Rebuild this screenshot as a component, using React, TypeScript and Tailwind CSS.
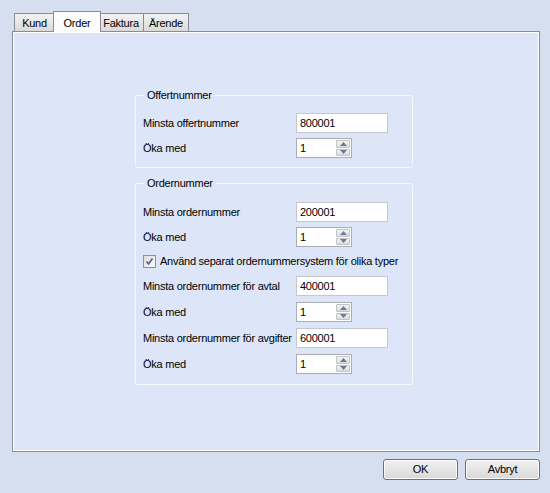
import React from 'react';

const tabs = ['Kund', 'Order', 'Faktura', 'Ärende'];

function Tab({ label, active }: { label: string; active: boolean }) {
  if (active) {
    return (
      <div className="relative z-10 -mb-px -mx-[2px] flex h-[21px] w-[48px] items-start justify-center border border-b-0 border-[#898c95] bg-[#fcfcfc] pt-[3px]">
        {label}
      </div>
    );
  }
  return (
    <div
      className={`flex h-[18px] items-center justify-center border border-b-0 border-[#898c95] bg-gradient-to-b from-[#f3f3f3] to-[#dadada] pt-[1px] ${
        label === 'Kund' ? 'w-[41px]' : 'w-[46px]'
      } ${label === 'Kund' ? '' : '-ml-px'}`}
    >
      {label}
    </div>
  );
}

function TextInput({ value }: { value: string }) {
  return (
    <div className="flex h-[20px] w-[92px] items-center border border-[#c4c7cc] bg-white px-[3px]">
      {value}
    </div>
  );
}

function Spinner({ value }: { value: string }) {
  return (
    <div className="flex h-[20px] w-[56px] items-stretch border border-[#abadb3] bg-white">
      <div className="flex flex-1 items-center px-[3px]">{value}</div>
      <div className="flex w-[16px] flex-col gap-px p-px">
        <div className="flex flex-1 items-center justify-center rounded-[1px] border border-[#c0c3c8] bg-gradient-to-b from-[#f4f4f4] to-[#dcdcdc]">
          <svg width="7" height="4" viewBox="0 0 7 4">
            <path d="M0 4 L3.5 0 L7 4 Z" fill="#6b7b96" />
          </svg>
        </div>
        <div className="flex flex-1 items-center justify-center rounded-[1px] border border-[#c0c3c8] bg-gradient-to-b from-[#f4f4f4] to-[#dcdcdc]">
          <svg width="7" height="4" viewBox="0 0 7 4">
            <path d="M0 0 L7 0 L3.5 4 Z" fill="#6b7b96" />
          </svg>
        </div>
      </div>
    </div>
  );
}

function Row({ label, children, className = '' }: { label: string; children: React.ReactNode; className?: string }) {
  return (
    <div className={`flex h-[20px] items-center ${className}`}>
      <div className="w-[153px] whitespace-nowrap">{label}</div>
      {children}
    </div>
  );
}

function Group({ title, children, className = '' }: { title: string; children: React.ReactNode; className?: string }) {
  return (
    <fieldset className={`w-[278px] rounded-[3px] border border-[#f4f7fd] px-[7px] ${className}`}>
      <legend className="ml-[1px] px-[3px] leading-[13px]">{title}</legend>
      <div className="flex flex-col">{children}</div>
    </fieldset>
  );
}

function Checkbox({ className = '' }: { className?: string }) {
  return (
    <div className={`flex h-[20px] items-center ${className}`}>
      <div className="flex h-[13px] w-[13px] items-center justify-center border border-[#8f8f8f] bg-gradient-to-br from-[#dcdcdc] to-[#fbfbfb]">
        <svg width="9" height="9" viewBox="0 0 9 9">
          <path d="M1.5 4.5 L3.5 7 L7.5 1.5" stroke="#4a5f97" strokeWidth="1.6" fill="none" />
        </svg>
      </div>
      <span className="ml-[4px] whitespace-nowrap">Använd separat ordernummersystem för olika typer</span>
    </div>
  );
}

function Button({ label }: { label: string }) {
  return (
    <button className="flex h-[21px] w-[75px] items-center justify-center rounded-[3px] border border-[#707070] bg-gradient-to-b from-[#f2f2f2] to-[#d8d8d8] shadow-[inset_0_0_0_1px_#fcfcfc]">
      {label}
    </button>
  );
}

export default function App() {
  return (
    <div
      className="flex h-[493px] w-[550px] flex-col bg-[#d6dff0] px-[12px] pt-[12px] text-[11px] tracking-[-0.25px] text-black"
      style={{ fontFamily: '"Liberation Sans", Arial, sans-serif' }}
    >
      {/* Tabs */}
      <div className="flex h-[19px] items-end pl-[2px]">
        {tabs.map((t) => (
          <Tab key={t} label={t} active={t === 'Order'} />
        ))}
      </div>

      {/* Panel */}
      <div className="h-[421px] w-[528px] border border-[#898c95] bg-[#dde6f8] pl-[122px] pt-[57px] shadow-[inset_1px_1px_0_#ffffff,inset_-1px_-1px_0_#ffffff]">
        <Group title="Offertnummer" className="pb-[9px] pt-[11px]">
          <Row label="Minsta offertnummer">
            <TextInput value="800001" />
          </Row>
          <Row label="Öka med" className="mt-[5px]">
            <Spinner value="1" />
          </Row>
        </Group>

        <Group title="Ordernummer" className="mt-[9px] pb-[10px] pt-[12px]">
          <Row label="Minsta ordernummer">
            <TextInput value="200001" />
          </Row>
          <Row label="Öka med" className="mt-[5px]">
            <Spinner value="1" />
          </Row>
          <Checkbox className="mt-[4px]" />
          <Row label="Minsta ordernummer för avtal" className="mt-[5px]">
            <TextInput value="400001" />
          </Row>
          <Row label="Öka med" className="mt-[6px]">
            <Spinner value="1" />
          </Row>
          <Row label="Minsta ordernummer för avgifter" className="mt-[6px]">
            <TextInput value="600001" />
          </Row>
          <Row label="Öka med" className="mt-[6px]">
            <Spinner value="1" />
          </Row>
        </Group>
      </div>

      {/* Buttons */}
      <div className="-mr-[2px] mt-[7px] flex justify-end gap-[7px]">
        <Button label="OK" />
        <Button label="Avbryt" />
      </div>
    </div>
  );
}
